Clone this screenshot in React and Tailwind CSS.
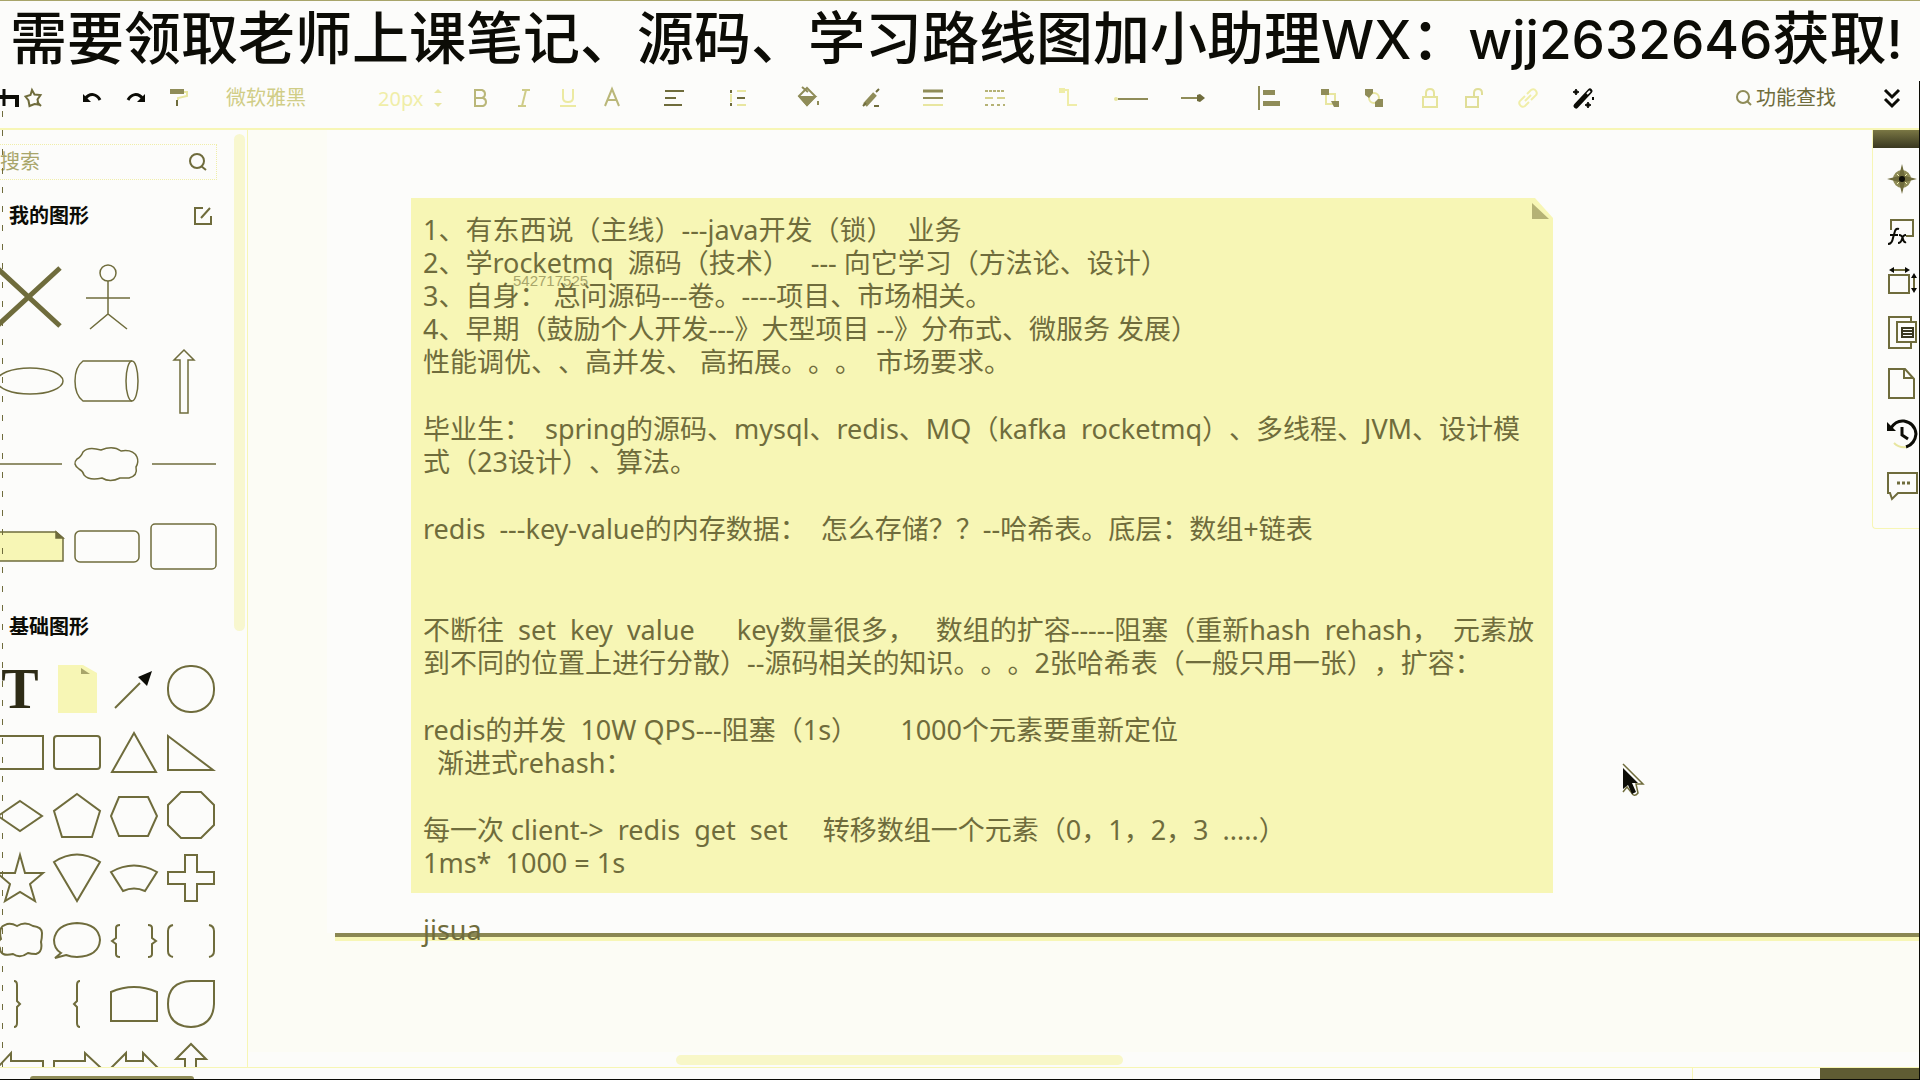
import React from "react";

const INK = "#6f6c3c";

function Svg({ w = 20, h = 20, sw = 2, color = "currentColor", fill = "none", children }) {
  return (
    <svg
      width={w}
      height={h}
      viewBox={`0 0 ${w} ${h}`}
      fill={fill}
      stroke={color}
      strokeWidth={sw}
      className="block shrink-0 overflow-visible"
      aria-hidden="true"
    >
      {children}
    </svg>
  );
}

function Tool({ label, className, children }) {
  return (
    <button type="button" aria-label={label} className={`flex h-10 shrink-0 items-center justify-center ${className}`}>
      {children}
    </button>
  );
}

function Toolbar() {
  return (
    <div className="flex h-[50px] shrink-0 items-start text-[#6f6c3c]">
      <Tool label="返回" className="w-5 text-[#0c0c06]">
        <Svg sw={4}>
          <path d="M0 9h17v10" />
          <path d="M4 1v17" strokeWidth="3" />
        </Svg>
      </Tool>
      <Tool label="收藏" className="ml-1 w-5">
        <Svg>
          <path d="M8 2l2.500 4.500 6 .5-3 4.500 1 5-4-.5-5 2-1-5.500-3-4 5-1.500z" />
          <path d="M13 14l4 4" />
        </Svg>
      </Tool>
      <Tool label="撤销" className="ml-[26px] w-11 text-[#0c0c06]">
        <Svg sw={3}>
          <path d="M3 11c5-7 12-5 15 1" />
          <path d="M1 6v8h8z" fill="currentColor" stroke="none" />
        </Svg>
      </Tool>
      <Tool label="重做" className="w-11 text-[#0c0c06]">
        <Svg sw={3}>
          <path d="M17 11c-5-7-12-5-15 1" />
          <path d="M19 6v8h-8z" fill="currentColor" stroke="none" />
        </Svg>
      </Tool>
      <Tool label="格式刷" className="w-10">
        <Svg>
          <path d="M2 1h14v5H2z" fill="#8f8c58" stroke="none" />
          <path d="M16 4h3v4l-9 2v2" stroke="#e8e6a0" />
          <path d="M9 12v6" />
        </Svg>
      </Tool>
      <select aria-label="字体" className="ml-7 h-10 w-[130px] shrink-0 appearance-none bg-transparent text-[20px] text-[#d0cd86]">
        <option>微软雅黑</option>
      </select>
      <input
        aria-label="字号"
        defaultValue="20px"
        className="ml-[22px] h-10 w-12 shrink-0 bg-transparent text-[20px] text-[#f0eea8] outline-none"
      />
      <Tool label="调整字号" className="ml-0.5 w-5">
        <Svg w={8} sw={0} fill="#e8e6a0">
          <path d="M0 5l4-4 4 4zM0 15l4 4 4-4z" />
        </Svg>
      </Tool>
      <div className="ml-2.5 flex">
        <Tool label="粗体" className="w-11">
          <Svg w={14} sw={2} color="#bab779">
            <path d="M2 2h7q3 1 3 4t-3 4H2zM2 10h8q3 1 3 4t-3 4H2z" />
          </Svg>
        </Tool>
        <Tool label="斜体" className="w-11">
          <Svg w={12} sw={2} color="#cfcc88">
            <path d="M4 2h8M0 18h8M8 2L4 18" />
          </Svg>
        </Tool>
        <Tool label="下划线" className="w-11">
          <Svg w={16} sw={2} color="#eceaa2">
            <path d="M3 1v9q0 4 5 4t5-4V1M0 18h16" />
          </Svg>
        </Tool>
        <Tool label="文字颜色" className="w-11">
          <Svg w={16} sw={2} color="#bab779">
            <path d="M1 18L8 1l7 17M4 12h8" />
          </Svg>
        </Tool>
      </div>
      <div className="ml-2 flex">
        <Tool label="对齐" className="w-16">
          <Svg sw={2}>
            <path d="M1 3h19M1 10h11M0 17h18" />
          </Svg>
        </Tool>
        <Tool label="行距" className="w-16">
          <Svg w={18} sw={2}>
            <path d="M2 2v3M2 15v3M8 10h8" />
            <path d="M8 3h9M8 17h9M2 6v8" stroke="#e8e6a0" />
          </Svg>
        </Tool>
      </div>
      <div className="ml-2 flex">
        <Tool label="填充" className="w-[62px]">
          <Svg w={22} h={22} sw={2} color="#8f8c58">
            <path d="M9 1l8 8-8 9-8-9z" />
            <path d="M2 10h15l-8 8z" fill="#8f8c58" />
            <path d="M4 0l6 5M20 14v4" />
          </Svg>
        </Tool>
        <Tool label="线条颜色" className="w-[62px]">
          <Svg>
            <path d="M4 17L14 6" strokeWidth="5" stroke="#8f8c58" />
            <path d="M2 18l3-3M15 4l3-3M13 18h5" />
          </Svg>
        </Tool>
        <Tool label="线条宽度" className="w-[62px]">
          <Svg w={22} color="#8f8c58">
            <path d="M1 3h20" strokeWidth="3" />
            <path d="M1 10h20" />
            <path d="M1 17h20" stroke="#e8e6a0" />
          </Svg>
        </Tool>
        <Tool label="线条样式" className="w-[62px]">
          <Svg w={22} color="#b5b275">
            <path d="M1 3h20" strokeDasharray="3 1" />
            <path d="M1 10h8M13 10h8" stroke="#d6d38c" />
            <path d="M1 17h3M7 17h3M13 17h3M19 17h2" />
          </Svg>
        </Tool>
      </div>
      <div className="ml-3 flex">
        <Tool label="连线类型" className="w-[62px]">
          <Svg color="#efeda8">
            <path d="M2 2h7v15h9" />
            <path d="M1 1h4v3H1z" fill="#efeda8" />
          </Svg>
        </Tool>
        <Tool label="起点" className="w-[62px]">
          <Svg w={34} sw={2} color="#8f8c58">
            <path d="M4 11h30" />
            <circle cx="2" cy="11" r="2" fill="#e8e6a0" stroke="none" />
          </Svg>
        </Tool>
        <Tool label="终点" className="w-[62px]">
          <Svg w={24} sw={2} color="#8f8c58">
            <path d="M0 10h18" />
            <path d="M16 7l3-1 5 4-5 4-3-1z" fill="#6f6c3c" stroke="none" />
          </Svg>
        </Tool>
      </div>
      <Tool label="对齐分布" className="ml-3.5 w-[62px]">
        <Svg w={22} h={24} color="#8f8c58">
          <path d="M1 0v24" />
          <path d="M5 4h12v5H5zM5 15h17v5H5z" fill="#8f8c58" stroke="none" />
        </Svg>
      </Tool>
      <div className="ml-2 flex">
        <Tool label="置于顶层" className="w-11">
          <Svg color="#e8e6a0">
            <path d="M6 6h9v10H6z" />
            <path d="M1 1h8v6H1zM11 13h8v6h-5z" fill="#8f8c58" stroke="none" />
          </Svg>
        </Tool>
        <Tool label="置于底层" className="w-11">
          <Svg color="#e8e6a0">
            <circle cx="10" cy="10" r="5" />
            <path d="M1 1h8v4l-4 5-4-3zM11 14l3-3h5v8h-8z" fill="#8f8c58" stroke="none" />
          </Svg>
        </Tool>
      </div>
      <div className="ml-3 flex">
        <Tool label="锁定" className="w-11">
          <Svg w={16} color="#e6e49c">
            <path d="M1 9h14v10H1zM4 9V5q0-4 4-4t4 4v4" />
          </Svg>
        </Tool>
        <Tool label="解锁" className="w-11">
          <Svg w={18} color="#e0de98">
            <path d="M1 9h12v10H1zM9 9V5q0-4 4-4t4 4v2" />
          </Svg>
        </Tool>
      </div>
      <Tool label="链接" className="ml-1 w-14">
        <Svg color="#f0eea8">
          <path d="M9 6l4-4q3-2 5 1t-1 5l-4 4M11 14l-4 4q-3 2-5-1t1-5l4-4M7 13l6-6" />
        </Svg>
      </Tool>
      <Tool label="美化" className="w-14 text-[#0c0c06]">
        <Svg w={22} sw={2}>
          <path d="M3 18L17 3" strokeWidth="5" strokeLinecap="round" />
          <path d="M14 6l3-3" stroke="#fcfcfa" />
          <path d="M3 1l1 2 2 1-2 1-1 2-1-2-2-1 2-1zM15 14l1 2 2 1-2 1-1 2-1-2-2-1 2-1z" fill="currentColor" strokeWidth="1" />
          <path d="M20 9v3" />
        </Svg>
      </Tool>
      <button type="button" className="ml-auto flex h-10 shrink-0 items-center gap-1 text-[20px] text-[#6f6c3c]">
        <Svg w={16} h={18} sw={2} color="#8f8c58">
          <circle cx="7" cy="8" r="6" />
          <path d="M11 12l4 4" />
        </Svg>
        功能查找
      </button>
      <Tool label="收起" className="ml-7 w-14 text-[#0c0c06]">
        <Svg w={18} sw={3}>
          <path d="M2 2l7 7 7-7M2 11l7 7 7-7" />
        </Svg>
      </Tool>
    </div>
  );
}

const mine = [
  <path key="x" d="M-1 2L62 60M62 2L-1 60" strokeWidth="5" />,
  <g key="man">
    <circle cx="33" cy="7" r="8" />
    <path d="M33 15v34M11 32h44M15 63l18-15 19 15" />
  </g>,
  null,
  <ellipse key="el" cx="32" cy="32" rx="33" ry="13" />,
  <g key="cyl">
    <path d="M57 12H8Q0 18 0 32t8 20h49" />
    <ellipse cx="57" cy="32" rx="6" ry="20" />
  </g>,
  <path key="up" d="M32 1L22 11h6v53h8V11h6z" />,
  <path key="l1" d="M0 32h64" />,
  <path
    key="cloud"
    d="M8 20q5-6 18-2 12-5 20 1 12-2 16 6 2 5-1 10 2 9-7 11-8 0-9 0-10 5-18 0-13 3-18-3-1-4-5-6-7-5-2-10 4-2 6-7z"
  />,
  <path key="l2" d="M0 32h64" />,
  <g key="note">
    <path d="M0 17h58l7 6v23H0z" fill="#f7f6b5" />
    <path d="M58 17v6h7z" fill={INK} />
  </g>,
  <rect key="r1" x="0" y="16" width="64" height="31" rx="5" />,
  <rect key="r2" x="-1" y="9" width="65" height="45" rx="4" />,
];

const basic = [
  "T",
  <g key="note" stroke="none">
    <path d="M5 0h25l14 8v40H5z" fill="#f7f6b5" />
    <path d="M28 3v6h9z" fill="#a8a56a" />
  </g>,
  <g key="arrow">
    <path d="M5 43l25-25" />
    <path d="M42 6l-5 15-9-9z" fill="#0c0c06" stroke="none" />
  </g>,
  <rect key="c" x="1" y="1" width="46" height="46" rx="22" />,
  <path key="rect" d="M1 8h46v33H1z" />,
  <rect key="rr" x="1" y="8" width="46" height="33" rx="3" />,
  <path key="tri" d="M24 5l22 39H2z" />,
  <path key="rt" d="M1 8l45 34H1z" />,
  <path key="dia" d="M24 10l22 15-22 15L2 25z" />,
  <path key="pen" d="M24 3l23 17-8 26H9L1 20z" />,
  <path key="hex" d="M9 6h29l9 19-9 20H9L1 25z" />,
  <path key="oct" d="M14 1h20l13 13v20L34 47H14L1 34V14z" />,
  <path key="star" d="M24 1l5 18h18L34 30l5 17-15-9-15 9 5-17L1 19h18z" />,
  <path key="sec" d="M24 47L1 8q23-15 46 0z" />,
  <path key="fan" d="M1 18q23-13 46 0L35 37q-11-5-22 0z" />,
  <path key="plus" d="M18 1h12v17h17v12H30v17H18V30H1V18h17z" />,
  <path key="cloud" d="M9 8q5-3 12 1 8-5 16 0 9 1 9 7 0 5-1 9 2 10-5 12-5 0-8-1-8 6-15 1-13 3-13-6-4-5 1-9-3-12 4-14z" />,
  <path key="speech" d="M8 36Q1 32 1 23 3 7 24 6q22 1 23 17-1 16-23 17-6 0-11-2l-11 3z" />,
  <path key="braces" d="M10 8Q6 8 6 11v10l-4 3 4 3v10q0 3 4 3M38 8q4 0 4 3v10l4 3-4 3v10q0 3-4 3" />,
  <path key="brackets" d="M6 8Q1 9 1 14v20q0 5 5 6M42 8q5 1 5 6v20q0 5-5 6" />,
  <path key="rb" d="M18 1q3 0 3 4v16l3 3-3 3v16q0 4-3 4" />,
  <path key="lb" d="M27 1q-3 0-3 4v16l-3 3 3 3v16q0 4 3 4" />,
  <path key="arch" d="M1 12q23-10 46 0v29H1z" />,
  <path key="tear" d="M47 1H24Q1 2 1 24t23 23q22-1 23-23z" />,
  <path key="la" d="M2 24L15 10v8h32v14" />,
  <path key="ra" d="M1 32V18h31V10l16 15" />,
  <path key="da" d="M1 25L16 10v8h17v-8l15 15" />,
  <path key="ua" d="M18 32V16H9L24 1l15 15H29v16" />,
];

function Sidebar() {
  return (
    <aside className="flex w-[248px] shrink-0 overflow-hidden border-r border-[#f7f6b5]">
      <div className="min-w-0 flex-1 pt-[14px]">
        <div className="mr-[17px] flex h-9 items-center justify-between border border-l-0 border-dotted border-[#f0eea8]">
          <input
            aria-label="搜索"
            placeholder="搜索"
            className="min-w-0 flex-1 bg-transparent text-[20px] outline-none placeholder:text-[#a8a56a]"
          />
          <button type="button" aria-label="开始搜索" className="mr-2 p-0">
            <Svg w={20} h={20} color={INK}>
              <ellipse cx="9" cy="9" rx="7" ry="7" />
              <path d="M13 14l5 4" />
            </Svg>
          </button>
        </div>
        <div className="mt-[18px] flex h-9 items-center justify-between pr-[22px] pl-[9px]">
          <h2 className="text-[20px] font-bold text-[#0c0c06]">我的图形</h2>
          <button type="button" aria-label="编辑我的图形">
            <Svg w={18} color={INK}>
              <path d="M9 2H1v16h16v-8M7 12l9-10" />
            </Svg>
          </button>
        </div>
        <div className="-ml-0.5 mt-8 grid grid-cols-[repeat(3,64px)] gap-x-[13px] gap-y-[19px]">
          {mine.map((shape, i) => (
            <Svg key={i} w={64} h={64} sw={1.5} color={INK}>
              {shape}
            </Svg>
          ))}
        </div>
        <h2 className="mt-8 h-8 pl-[9px] text-[20px] leading-8 font-bold text-[#0c0c06]">基础图形</h2>
        <div className="-ml-1 mt-[22px] grid grid-cols-[repeat(4,48px)] gap-x-[9px] gap-y-[15px]">
          {basic.map((shape, i) =>
            shape === "T" ? (
              <span
                key={i}
                className="h-12 text-center font-['Liberation_Serif',serif] text-[56px] leading-[48px] font-bold text-[#2e2c16]"
              >
                T
              </span>
            ) : (
              <Svg key={i} w={48} h={48} color={INK}>
                {shape}
              </Svg>
            )
          )}
        </div>
      </div>
      <div className="mr-0.5 mt-1 h-[497px] w-[11px] shrink-0 rounded-full bg-[#f8f7cf]" />
    </aside>
  );
}

const paragraphs = [
  [
    "1、有东西说（主线）---java开发（锁）  业务",
    "2、学rocketmq  源码（技术）   --- 向它学习（方法论、设计）",
    "3、自身： 总问源码---卷。----项目、市场相关。",
    "4、早期（鼓励个人开发---》大型项目 --》分布式、微服务 发展）",
    "性能调优、、高并发、 高拓展。。。  市场要求。",
  ],
  ["毕业生：  spring的源码、mysql、redis、MQ（kafka  rocketmq）、多线程、JVM、设计模", "式（23设计）、算法。"],
  ["redis  ---key-value的内存数据：  怎么存储？？--哈希表。底层：数组+链表"],
  [],
  [
    "不断往  set  key  value      key数量很多，   数组的扩容-----阻塞（重新hash  rehash，  元素放",
    "到不同的位置上进行分散）--源码相关的知识。。。2张哈希表（一般只用一张），扩容：",
  ],
  ["redis的并发  10W QPS---阻塞（1s）      1000个元素要重新定位", "  渐进式rehash："],
  ["每一次 client->  redis  get  set     转移数组一个元素（0，1，2，3  .....）", "1ms*  1000 = 1s"],
];

function Note() {
  return (
    <div className="relative mr-[367px] bg-[#f7f6b5] px-3 pt-[15px] pb-[14px] text-[27px] leading-[33px] whitespace-pre text-[#6f6c3c] [clip-path:polygon(0_0,calc(100%-18px)_0,100%_20px,100%_100%,0_100%)] [text-spacing-trim:space-all]">
      <div className="flex flex-col gap-[34px]">
        {paragraphs.map((lines, i) => (
          <div key={i}>
            {lines.map((line) => (
              <p key={line}>{line}</p>
            ))}
          </div>
        ))}
      </div>
      <span className="absolute top-[75px] left-[102px] font-['Liberation_Sans',sans-serif] text-[15px] leading-4 text-[#a8a56a]">
        542717525
      </span>
      <svg width="17" height="16" viewBox="0 0 17 16" className="absolute top-[5px] right-[4px]" aria-hidden="true">
        <path d="M0 0l17 16H0z" fill="#b5b275" />
      </svg>
    </div>
  );
}

const panelIcons = [
  ["导航", <g key="i"><circle cx="15" cy="15" r="8" fill="#8f8c58" stroke="#8f8c58" /><path d="M15 0l3 12 12 3-12 3-3 12-3-12-12-3 12-3z" fill={INK} stroke="none" /><path d="M10 10l2 2M20 10l-2 2M10 20l2-2M20 20l-2-2" stroke="#f7f6b5" strokeWidth="1" /><circle cx="15" cy="15" r="3" fill="#0c0c06" stroke="none" /></g>],
  ["公式", <g key="i"><path d="M4 15V5h22v16h-7" /><path d="M1 29q4 0 5-6l2-7q1-3 4-2M3 20h8M12 20q3 0 4 4t3 3M19 20q-3 0-4 4t-4 4" stroke="#0c0c06" /></g>],
  ["尺寸", <g key="i"><path d="M2 9h20v18H2zM4 4h17M27 11v14" /><path d="M7 1v6L2 4zM18 1v6l5-3zM24 12h6l-3-5zM24 22h6l-3 5z" fill="#0c0c06" stroke="none" /></g>],
  ["图层", <g key="i"><path d="M24 5V0H2v31h22v-5" /><path d="M10 5h19v20H10z" /><path d="M15 11h11v9H15zM15 14h11M15 17h11" stroke="#3a3820" /></g>],
  ["页面", <path key="i" d="M2 1h16l9 10v19H2zM17 1v9h9" />],
  ["历史", <g key="i"><path d="M4 9q5-8 13-7 11 2 12 13-1 10-10 13" strokeWidth="3" stroke="#0c0c06" /><path d="M0 3v9h9z" fill="#0c0c06" stroke="none" /><path d="M15 8v8l6 4" strokeWidth="3" stroke="#0c0c06" /><path d="M19 28q-7 1-12-4" stroke="#e8e6a0" /></g>],
  ["评论", <g key="i"><path d="M1 3h29v20H11l-6 6-2-6H1z" /><path d="M10 13h3M15 13h3M20 13h3" strokeWidth="3" /></g>],
];

function RightPanel() {
  return (
    <div className="absolute top-0 right-0 w-12 rounded-bl border-b border-l border-[#f7f6b5] bg-[#fcfcfa] pb-[18px]">
      <div className="h-[18px] bg-gradient-to-b from-[#7a7744] to-[#3a3820]" />
      <div className="mt-[5px] flex flex-col">
        {panelIcons.map(([label, icon]) => (
          <button key={label} type="button" aria-label={label} className="flex h-[51px] items-center justify-end pr-[3px]">
            <Svg w={30} h={30} color={INK}>
              {icon}
            </Svg>
          </button>
        ))}
      </div>
    </div>
  );
}

function Canvas() {
  return (
    <main className="relative flex min-w-0 flex-1 flex-col overflow-hidden bg-[#fcfcf5]">
      <div className="ml-[79px] bg-[#fcfcfa] pt-[68px] pl-[84px]">
        <Note />
        <p className="mt-5 h-5 pl-3 text-[27px] leading-[33px] text-[#6f6c3c]">
          <span className="relative z-10">jisua</span>
        </p>
      </div>
      <div className="ml-[87px] h-2 shrink-0 border-t-4 border-[#8a8753] bg-[#f7f6b5]" />
      <div className="mt-auto flex h-[15px] shrink-0 bg-[#fcfcfa] pt-[3px]">
        <div className="ml-[428px] h-[10px] w-[447px] rounded-full bg-[#f8f7c8]" />
      </div>
      <RightPanel />
      <svg width="24" height="36" viewBox="0 0 24 36" className="absolute top-[633px] left-[1374px]" aria-hidden="true">
        <path d="M1 1l20 20h-7l2 9q-4 5-7-1l-4-5-4 5" fill="none" stroke={INK} strokeWidth="1.500" />
        <path d="M1 5l15 15h-6l4 9-4 2-4-9-5 4z" fill="#0c0c06" />
      </svg>
    </main>
  );
}

export default function App() {
  return (
    <div className="relative flex h-screen flex-col overflow-hidden border-t border-b border-t-[#a8a56a] border-b-[#0c0c06] bg-[#fcfcfa] font-['Noto_Sans','Noto_Sans_CJK_SC',sans-serif]">
      <header className="flex h-[77px] shrink-0 items-center pl-2.5 font-['Inter','Noto_Sans_CJK_SC',sans-serif] text-[57px] leading-[76px] font-medium whitespace-nowrap text-[#0c0c06]">
        <h1>
          需要领取老师上课笔记、源码、学习路线图加小助理<span className="text-[53px]">WX</span>：
          <span className="text-[53px]">wjj2632646</span>获取<span className="text-[53px]">!</span>
        </h1>
      </header>
      <Toolbar />
      <div className="flex min-h-0 flex-1 border-t-2 border-b border-[#f7f6b5]">
        <Sidebar />
        <Canvas />
      </div>
      <footer className="flex h-[11px] shrink-0 justify-end">
        <div className="mt-auto mr-auto ml-[30px] h-[3px] w-[164px] rounded-t bg-[#8f8c58]" />
        <div className="w-32 border-l border-[#f7f6b5]" />
        <div className="w-[100px] bg-[#5f5c33]" />
      </footer>
      <div className="pointer-events-none absolute top-[110px] bottom-0 left-0.5 w-px bg-[repeating-linear-gradient(to_bottom,#6f6c3c_0_6px,transparent_6px_19px)]" />
      <div className="pointer-events-none absolute top-20 right-0 bottom-0 border-l border-[#0c0c06]" />
    </div>
  );
}
